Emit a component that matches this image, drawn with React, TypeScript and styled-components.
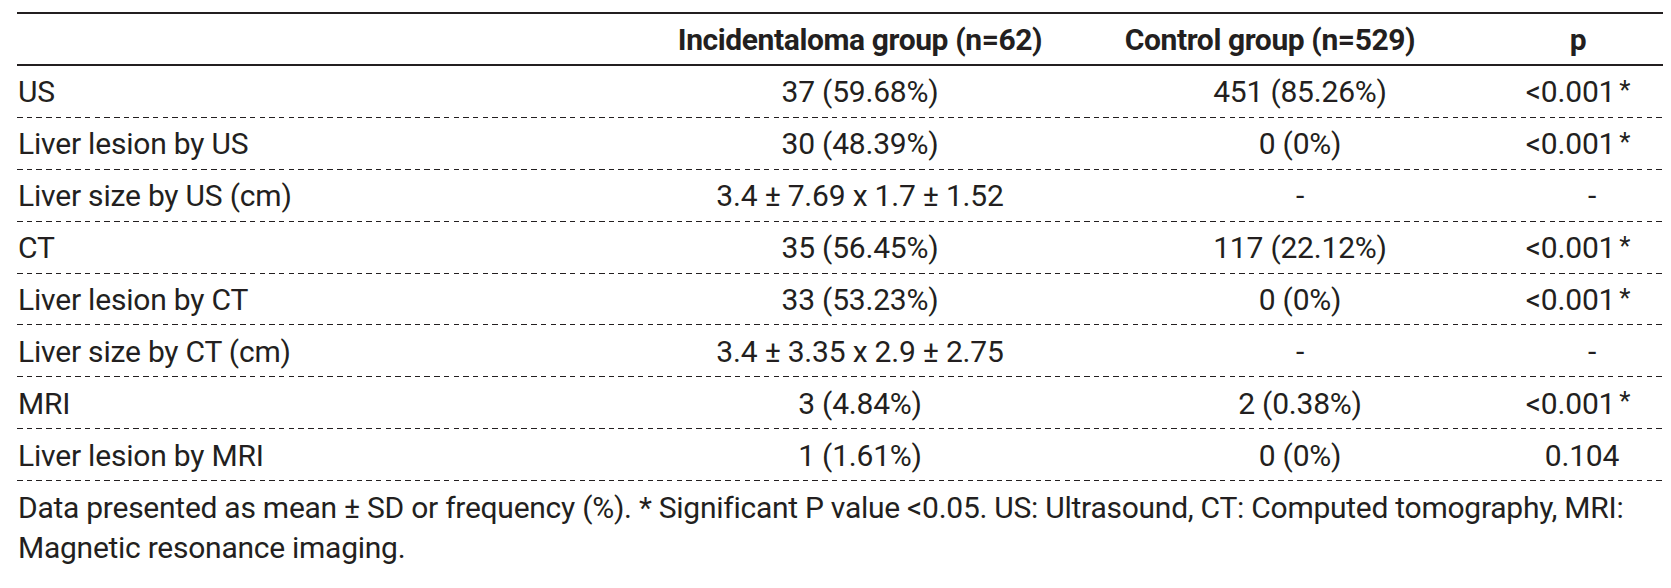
import React from "react";
import styled, { createGlobalStyle } from "styled-components";

const Global = createGlobalStyle`
  html, body {
    margin: 0;
    padding: 0;
    background: #ffffff;
  }
  body {
    font-family: Roboto, "Liberation Sans", Arial, sans-serif;
    color: #231f20;
  }
`;

const COLS = "596px 494px 386px 170px";

const Page = styled.div`
  padding: 12px 0 0 17px;
  width: 1646px;
`;

const Table = styled.div`
  display: flex;
  flex-direction: column;
`;

const HeadRow = styled.div`
  display: grid;
  grid-template-columns: ${COLS};
  height: 54px;
  box-sizing: border-box;
  border-top: 2px solid #231f20;
  border-bottom: 2px solid #231f20;
`;

const BodyRow = styled.div`
  display: grid;
  grid-template-columns: ${COLS};
  height: 51.875px;
  box-sizing: border-box;
  background-image: repeating-linear-gradient(
    90deg,
    #231f20 0 5.5px,
    transparent 5.5px 9.7px
  );
  background-size: 100% 1px;
  background-position: left bottom;
  background-repeat: no-repeat;
`;

const HeadCell = styled.div<{ $shift?: number }>`
  display: flex;
  align-items: center;
  justify-content: center;
  font-size: 30px;
  font-weight: 700;
  letter-spacing: -0.4px;
  padding-right: ${(p) => (p.$shift ? `${p.$shift}px` : "0")};
  white-space: nowrap;
`;

const LabelCell = styled.div`
  display: flex;
  align-items: center;
  padding-left: 1px;
  font-size: 30px;
  font-weight: 400;
  letter-spacing: -0.2px;
  white-space: nowrap;
`;

const ValueCell = styled.div<{ $shift?: number }>`
  display: flex;
  align-items: center;
  justify-content: center;
  font-size: 30px;
  font-weight: 400;
  letter-spacing: -0.2px;
  white-space: nowrap;
  padding-left: ${(p) => (p.$shift ? `${p.$shift}px` : "0")};
`;

const Star = styled.span`
  margin-left: 4px;
  font-size: 26px;
  align-self: flex-start;
  margin-top: 9px;
`;

const Footnote = styled.div`
  padding: 7px 0 0 1px;
  font-size: 30px;
  font-weight: 400;
  line-height: 40px;
  letter-spacing: -0.26px;
`;

const FootLine = styled.div`
  white-space: nowrap;
`;

type Row = {
  label: string;
  inc: string;
  ctrl: string;
  p: string;
  sig?: boolean;
};

const rows: Row[] = [
  { label: "US", inc: "37 (59.68%)", ctrl: "451 (85.26%)", p: "<0.001", sig: true },
  { label: "Liver lesion by US", inc: "30 (48.39%)", ctrl: "0 (0%)", p: "<0.001", sig: true },
  { label: "Liver size by US (cm)", inc: "3.4 ± 7.69 x 1.7 ± 1.52", ctrl: "-", p: "-" },
  { label: "CT", inc: "35 (56.45%)", ctrl: "117 (22.12%)", p: "<0.001", sig: true },
  { label: "Liver lesion by CT", inc: "33 (53.23%)", ctrl: "0 (0%)", p: "<0.001", sig: true },
  { label: "Liver size by CT (cm)", inc: "3.4 ± 3.35 x 2.9 ± 2.75", ctrl: "-", p: "-" },
  { label: "MRI", inc: "3 (4.84%)", ctrl: "2 (0.38%)", p: "<0.001", sig: true },
  { label: "Liver lesion by MRI", inc: "1 (1.61%)", ctrl: "0 (0%)", p: "0.104" },
];

export default function App() {
  return (
    <Page>
      <Global />
      <Table>
        <HeadRow>
          <HeadCell />
          <HeadCell>Incidentaloma group (n=62)</HeadCell>
          <HeadCell $shift={60}>Control group (n=529)</HeadCell>
          <HeadCell>p</HeadCell>
        </HeadRow>
        {rows.map((r) => (
          <BodyRow key={r.label}>
            <LabelCell>{r.label}</LabelCell>
            <ValueCell>{r.inc}</ValueCell>
            <ValueCell>{r.ctrl}</ValueCell>
            <ValueCell $shift={r.p === "-" ? 28 : r.p === "0.104" ? 8 : 0}>
              {r.p}
              {r.sig && <Star>*</Star>}
            </ValueCell>
          </BodyRow>
        ))}
      </Table>
      <Footnote>
        <FootLine>
          Data presented as mean ± SD or frequency (%). * Significant P value &lt;0.05. US: Ultrasound, CT:
          Computed tomography, MRI:
        </FootLine>
        <FootLine>Magnetic resonance imaging.</FootLine>
      </Footnote>
    </Page>
  );
}
